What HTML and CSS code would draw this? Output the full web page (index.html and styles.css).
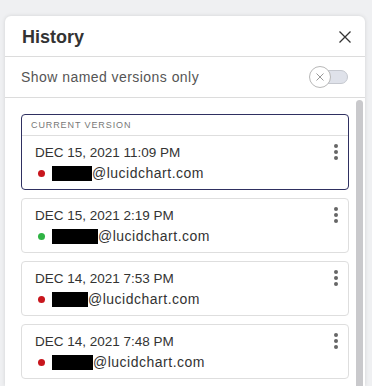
FILE: index.html
```html
<!DOCTYPE html>
<html>
<head>
<meta charset="utf-8">
<link rel="stylesheet" href="styles.css">
</head>
<body>
<div class="panel">
  <div class="header">
    <h1 class="title">History</h1>
    <button class="close" aria-label="Close">
      <svg width="12" height="12" viewBox="0 0 12 12"><path d="M0.5 0.5 L11.5 11.5 M11.5 0.5 L0.5 11.5" stroke="#333" stroke-width="1.3" fill="none"/></svg>
    </button>
  </div>
  <div class="toggle-row">
    <span class="toggle-label">Show named versions only</span>
    <span class="toggle">
      <span class="track"></span>
      <span class="knob">
        <svg width="8" height="8" viewBox="0 0 8 8"><path d="M0.5 0.5 L7.5 7.5 M7.5 0.5 L0.5 7.5" stroke="#999" stroke-width="1" fill="none"/></svg>
      </span>
    </span>
  </div>
  <div class="content">
    <div class="list">
      <div class="card current">
        <div class="card-label">CURRENT VERSION</div>
        <div class="card-body">
          <div class="info">
            <div class="date">DEC 15, 2021 11:09 PM</div>
            <div class="user"><span class="dot red"></span><span class="redact" style="width:40px"></span>@lucidchart.com</div>
          </div>
          <span class="kebab"><i></i><i></i><i></i></span>
        </div>
      </div>
      <div class="card">
        <div class="card-body">
          <div class="info">
            <div class="date">DEC 15, 2021 2:19 PM</div>
            <div class="user"><span class="dot green"></span><span class="redact" style="width:46px"></span>@lucidchart.com</div>
          </div>
          <span class="kebab"><i></i><i></i><i></i></span>
        </div>
      </div>
      <div class="card">
        <div class="card-body">
          <div class="info">
            <div class="date">DEC 14, 2021 7:53 PM</div>
            <div class="user"><span class="dot red"></span><span class="redact" style="width:36px"></span>@lucidchart.com</div>
          </div>
          <span class="kebab"><i></i><i></i><i></i></span>
        </div>
      </div>
      <div class="card">
        <div class="card-body">
          <div class="info">
            <div class="date">DEC 14, 2021 7:48 PM</div>
            <div class="user"><span class="dot red"></span><span class="redact" style="width:41px"></span>@lucidchart.com</div>
          </div>
          <span class="kebab"><i></i><i></i><i></i></span>
        </div>
      </div>
    </div>
    <div class="scrollbar"></div>
  </div>
</div>
</body>
</html>
```
FILE: styles.css
```css
* { box-sizing: border-box; }
html, body { margin: 0; height: 100%; }
body {
  background: #eff0f2;
  padding: 16px 7px 0 5px;
  overflow: hidden;
  font-family: "Liberation Sans", Arial, sans-serif;
  color: #333;
}
.panel {
  width: 360px;
  height: 370px;
  overflow: hidden;
  background: #fff;
  border-radius: 6px 6px 0 0;
  box-shadow: 0 0 4px rgba(0, 0, 0, 0.12);
}
.header {
  height: 41px;
  display: flex;
  align-items: center;
  justify-content: space-between;
  padding: 2px 14px 0 17px;
  border-bottom: 1px solid #dcdcdc;
}
.title {
  margin: 0;
  font-size: 18px;
  font-weight: bold;
  color: #333;
}
.close {
  border: 0;
  background: none;
  padding: 0;
  width: 12px;
  height: 12px;
  display: flex;
}
.toggle-row {
  height: 41px;
  display: flex;
  align-items: center;
  justify-content: space-between;
  padding: 0 17px 0 16px;
  border-bottom: 1px solid #dcdcdc;
}
.toggle-label {
  font-size: 14px;
  letter-spacing: 0.45px;
  color: #555;
}
.toggle {
  position: relative;
  width: 39px;
  height: 22px;
  display: flex;
  align-items: center;
}
.track {
  margin-left: 8px;
  width: 31px;
  height: 14px;
  border-radius: 7px;
  background: #dfe2ea;
  border: 1px solid #c5c8cf;
}
.knob {
  position: absolute;
  left: 0;
  top: 0;
  width: 22px;
  height: 22px;
  border-radius: 50%;
  background: #fff;
  border: 1px solid #b8b8b8;
  display: flex;
  align-items: center;
  justify-content: center;
}
.content {
  display: flex;
  height: 300px;
}
.list {
  width: 351px;
  padding: 16px 7px 0 16px;
  display: flex;
  flex-direction: column;
  gap: 8px;
}
.scrollbar {
  width: 7px;
  margin-top: 2px;
  background: #c9c9cc;
  border-radius: 4px 4px 0 0;
}
.card {
  border: 1px solid #dedede;
  border-radius: 4px;
}
.card.current {
  border-color: #2f3061;
}
.card-label {
  height: 21px;
  border-bottom: 1px solid #dedede;
  padding: 5px 0 0 9px;
  font-size: 9px;
  letter-spacing: 0.9px;
  color: #777;
  line-height: 11px;
}
.card-body {
  display: flex;
  justify-content: space-between;
  padding: 7px 10px 6px 13px;
}
.date, .user {
  font-size: 13.5px;
  line-height: 20px;
  color: #333;
}
.user {
  display: flex;
  align-items: center;
  padding-left: 3px;
  font-size: 14px;
  letter-spacing: 0.5px;
}
.dot {
  width: 7px;
  height: 7px;
  border-radius: 50%;
  margin-right: 7px;
}
.dot.red { background: #c8161d; }
.dot.green { background: #2fb344; }
.redact {
  height: 15px;
  background: #000;
}
.kebab {
  display: flex;
  flex-direction: column;
  gap: 2px;
  padding-top: 1px;
}
.kebab i {
  width: 4px;
  height: 4px;
  border-radius: 50%;
  background: #666;
}
```
